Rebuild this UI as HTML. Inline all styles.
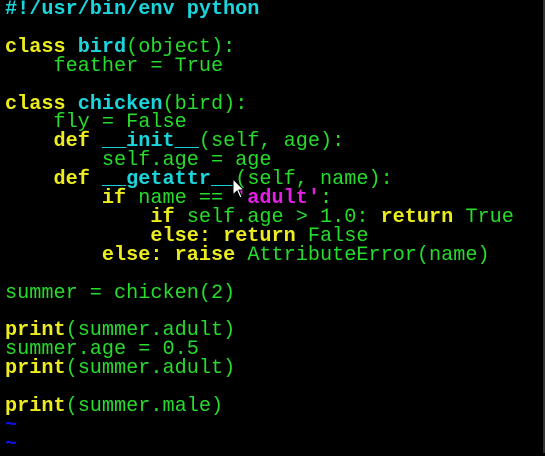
<!DOCTYPE html>
<html><head><meta charset="utf-8"><style>
html,body{margin:0;padding:0;background:#000;width:545px;height:453px;overflow:hidden}
pre{position:absolute;left:5px;top:1px;margin:0;font-family:"Liberation Mono",monospace;font-size:20.2px;line-height:18.9px;color:#26dc2c}
.y{color:#ecec1e;font-weight:bold}
.c{color:#1ad6dc;font-weight:bold}
.m{color:#e61ee6;font-weight:bold}
.b{color:#1010e0;font-weight:bold}
.edge{position:absolute;right:0;top:0;width:2px;height:453px;background:#333}
</style></head><body>
<pre><span class="c">#!/usr/bin/env python</span>

<span class="y">class</span> <span class="c">bird</span>(object):
    feather = True

<span class="y">class</span> <span class="c">chicken</span>(bird):
    fly = False
    <span class="y">def</span> <span class="c">__init__</span>(self, age):
        self.age = age
    <span class="y">def</span> <span class="c">__getattr__</span>(self, name):
        <span class="y">if</span> name == <span class="m">'adult'</span>:
            <span class="y">if</span> self.age &gt; 1.0: <span class="y">return</span> True
            <span class="y">else:</span> <span class="y">return</span> False
        <span class="y">else:</span> <span class="y">raise</span> AttributeError(name)

summer = chicken(2)

<span class="y">print</span>(summer.adult)
summer.age = 0.5
<span class="y">print</span>(summer.adult)

<span class="y">print</span>(summer.male)
<span class="b">~</span>
<span class="b">~</span></pre>
<svg style="position:absolute;left:232px;top:178px" width="14" height="22" viewBox="0 0 14 22"><path d="M1 1 L1 17 L5 13 L8 20 L10 19 L7 12 L12 12 Z" fill="#fff" stroke="#000" stroke-width="1"/></svg>
<div class="edge"></div>
</body></html>
